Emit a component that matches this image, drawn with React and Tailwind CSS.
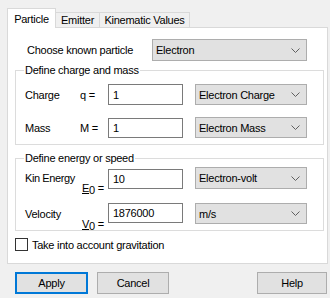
import React from "react";

function Chevron() {
  return (
    <svg width="9" height="5" viewBox="0 0 9 5" className="shrink-0">
      <path d="M0.5 0.5 L4.5 4.5 L8.5 0.5" fill="none" stroke="#606060" strokeWidth="1" />
    </svg>
  );
}

function Combo({ value, className }) {
  return (
    <div
      className={`flex items-center justify-between bg-[#e1e1e1] border border-[#adadad] pl-[3px] pr-[6px] ${className}`}
    >
      <span>{value}</span>
      <Chevron />
    </div>
  );
}

function Field({ value, className }) {
  return (
    <div className={`flex items-center bg-white border border-[#7a7a7a] pl-[4px] w-[75px] ${className}`}>
      {value}
    </div>
  );
}

function Button({ label, primary, className }) {
  return (
    <button
      className={`h-[22px] bg-[#e1e1e1] flex items-center justify-center ${
        primary ? "border-2 border-[#0078d7]" : "border border-[#adadad]"
      } ${className}`}
    >
      {label}
    </button>
  );
}

export default function App() {
  return (
    <div className="w-[330px] h-[298px] bg-[#f0f0f0] pt-2 pl-[7px] font-['Liberation_Sans',Arial,sans-serif] text-[11px] leading-[14px] tracking-[-0.25px] text-black">
      {/* Tabs */}
      <div className="flex items-end h-[19px]">
        <div className="relative z-10 -mb-px w-[49px] h-[20px] bg-white border border-b-0 border-[#d9d9d9] flex items-start justify-center pt-[3px]">
          Particle
        </div>
        <div className="w-[44px] h-[15px] border border-l-0 border-b-0 border-[#d9d9d9] flex items-center justify-center">
          Emitter
        </div>
        <div className="w-[90px] h-[15px] border border-l-0 border-b-0 border-[#d9d9d9] flex items-center justify-center">
          Kinematic Values
        </div>
      </div>

      {/* Tab panel */}
      <div className="w-[321px] h-[237px] bg-white border border-[#d9d9d9]">
        <div className="mt-[11px] flex items-center h-[22px]">
          <span className="pl-[19px] w-[144px]">Choose known particle</span>
          <Combo value="Electron" className="w-[155px] h-[22px]" />
        </div>

        <fieldset className="ml-[7px] mt-[2px] w-[309px] border border-[#dcdcdc] pb-[6px]">
          <legend className="ml-[8px] px-[1px] leading-[14px]">Define charge and mass</legend>
          <div className="mt-[7px] flex items-center h-[21px]">
            <span className="pl-[9px] w-[64px]">Charge</span>
            <span className="w-[28px]">q =</span>
            <Field value="1" className="h-[21px]" />
            <Combo value="Electron Charge" className="ml-[12px] w-[112px] h-[21px]" />
          </div>
          <div className="mt-[12px] flex items-center h-[21px]">
            <span className="pl-[9px] w-[64px]">Mass</span>
            <span className="w-[28px]">M =</span>
            <Field value="1" className="h-[20px]" />
            <Combo value="Electron Mass" className="ml-[12px] w-[112px] h-[21px]" />
          </div>
        </fieldset>

        <fieldset className="ml-[7px] mt-[6px] w-[309px] border border-[#dcdcdc] pb-[6px]">
          <legend className="ml-[8px] px-[1px] leading-[14px]">Define energy or speed</legend>
          <div className="mt-[2px] flex items-center h-[22px]">
            <span className="pl-[9px] w-[64px] tracking-[-0.4px]">Kin Energy</span>
            <span className="w-[28px] pl-[2px] translate-y-[10px]">
              <span className="underline">E</span>
              <span className="relative top-[2px]">0</span> =
            </span>
            <Field value="10" className="h-[20px] self-end" />
            <Combo value="Electron-volt" className="ml-[12px] w-[112px] h-[22px]" />
          </div>
          <div className="mt-[14px] flex items-center h-[21px]">
            <span className="pl-[9px] w-[64px]">Velocity</span>
            <span className="w-[28px] pl-[2px] translate-y-[10px]">
              <span className="underline">V</span>
              <span className="relative top-[2px]">0</span> =
            </span>
            <Field value="1876000" className="h-[20px] self-start" />
            <Combo value="m/s" className="ml-[12px] w-[112px] h-[21px]" />
          </div>
        </fieldset>

        <div className="ml-[7px] mt-[7px] flex items-center h-[13px] gap-[4px]">
          <div className="w-[13px] h-[13px] border border-[#333333] bg-white" />
          <span>Take into account gravitation</span>
        </div>
      </div>

      {/* Buttons */}
      <div className="mt-[8px] ml-[8px] w-[312px] flex">
        <Button label="Apply" primary className="w-[73px]" />
        <Button label="Cancel" className="ml-[9px] w-[72px]" />
        <Button label="Help" className="ml-auto w-[70px]" />
      </div>
    </div>
  );
}
